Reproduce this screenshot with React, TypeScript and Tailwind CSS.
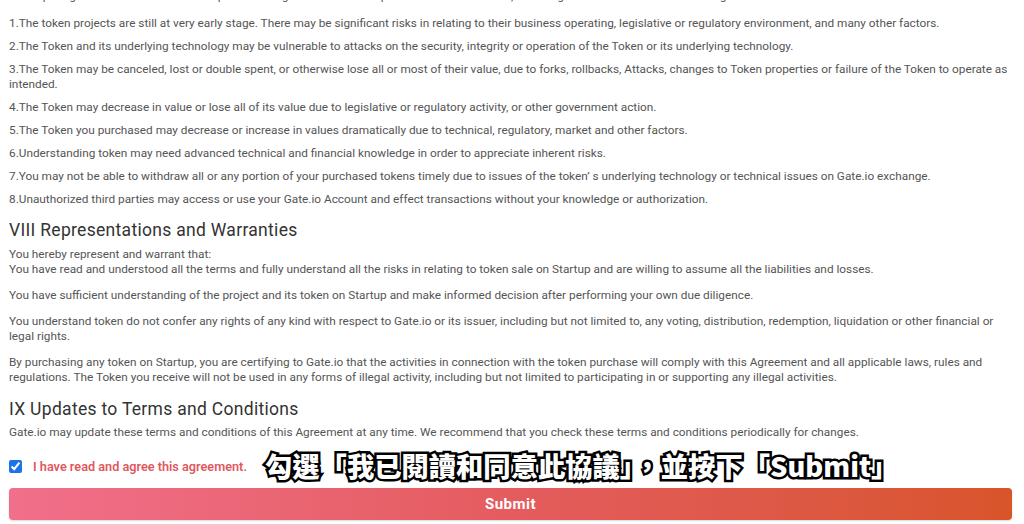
import { useState } from "react";

const risks = [
  "1.The token projects are still at very early stage. There may be significant risks in relating to their business operating, legislative or regulatory environment, and many other factors.",
  "2.The Token and its underlying technology may be vulnerable to attacks on the security, integrity or operation of the Token or its underlying technology.",
  "3.The Token may be canceled, lost or double spent, or otherwise lose all or most of their value, due to forks, rollbacks, Attacks, changes to Token properties or failure of the Token to operate as intended.",
  "4.The Token may decrease in value or lose all of its value due to legislative or regulatory activity, or other government action.",
  "5.The Token you purchased may decrease or increase in values dramatically due to technical, regulatory, market and other factors.",
  "6.Understanding token may need advanced technical and financial knowledge in order to appreciate inherent risks.",
  "7.You may not be able to withdraw all or any portion of your purchased tokens timely due to issues of the token\u2019 s underlying technology or technical issues on Gate.io exchange.",
  "8.Unauthorized third parties may access or use your Gate.io Account and effect transactions without your knowledge or authorization.",
];

const warranties = [
  "You have sufficient understanding of the project and its token on Startup and make informed decision after performing your own due diligence.",
  "You understand token do not confer any rights of any kind with respect to Gate.io or its issuer, including but not limited to, any voting, distribution, redemption, liquidation or other financial or legal rights.",
  "By purchasing any token on Startup, you are certifying to Gate.io that the activities in connection with the token purchase will comply with this Agreement and all applicable laws, rules and regulations. The Token you receive will not be used in any forms of illegal activity, including but not limited to participating in or supporting any illegal activities.",
];

export default function App() {
  const [agreed, setAgreed] = useState(true);

  return (
    <div className="relative h-[524px] w-[1024px] overflow-hidden bg-white font-['Roboto','Liberation_Sans',sans-serif] text-[11.8px] leading-[15px] text-[#555]">
      <div className="-mt-[11px] pl-[9px] pr-[16px]">
        <p>
          Participating in the Token sale on Startup involves significant risks and potential financial losses, including but not limited to the following:
        </p>
        <div className="mt-[12px] flex flex-col gap-[8px]">
          {risks.map((r) => (
            <p key={r}>{r}</p>
          ))}
        </div>

        <h2 className="mt-[11px] text-[17.5px] leading-[24px] tracking-[0.3px] text-[#333]">
          VIII Representations and Warranties
        </h2>
        <p className="mt-[5px]">
          You hereby represent and warrant that:
          <br />
          You have read and understood all the terms and fully understand all the risks in relating to token sale on Startup and are willing to assume all the liabilities and losses.
        </p>
        <div className="mt-[11px] flex flex-col gap-[11px]">
          {warranties.map((w) => (
            <p key={w}>{w}</p>
          ))}
        </div>

        <h2 className="mt-[12px] text-[17.5px] leading-[24px] tracking-[0.3px] text-[#333]">
          IX Updates to Terms and Conditions
        </h2>
        <p className="mt-[4px]">
          Gate.io may update these terms and conditions of this Agreement at any time. We recommend that you check these terms and conditions periodically for changes.
        </p>

        <label className="mt-[19px] flex items-center gap-[11px]">
          <input
            type="checkbox"
            checked={agreed}
            onChange={(e) => setAgreed(e.target.checked)}
            className="h-[13px] w-[13px] accent-[#1a73e8]"
          />
          <span className="text-[12.7px] font-semibold text-[#e0585e]">I have read and agree this agreement.</span>
        </label>

        <button
          type="button"
          className="mt-[14px] flex h-[32px] w-[1003px] items-center justify-center rounded-[4px] bg-gradient-to-r from-[#f26f8b] via-[#e45c5e] to-[#d8552a] text-[15px] font-bold tracking-[0.5px] text-white shadow-[0_1px_2px_rgba(0,0,0,0.15)]"
        >
          Submit
        </button>
      </div>

      <div className="absolute left-[265px] top-[447px] font-['Noto_Sans_CJK_TC',sans-serif] text-[27.3px] font-black leading-[36px] text-white [-webkit-text-stroke:5px_#000] [paint-order:stroke_fill]">
        勾選「我已閱讀和同意此協議」，並按下「Submit」
      </div>
    </div>
  );
}
